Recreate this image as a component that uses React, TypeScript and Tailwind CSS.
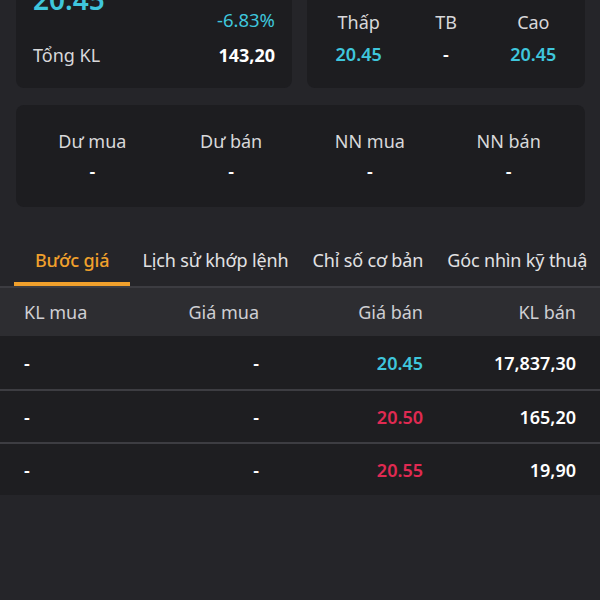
const CYAN = "text-[#3fc6dc]"
const RED = "text-[#e02a52]"

interface StatCol {
    label: string
    value: string
    tone?: "cyan" | "plain"
}

const rangeCols: StatCol[] = [
    { label: "Thấp", value: "20.45", tone: "cyan" },
    { label: "TB", value: "-" },
    { label: "Cao", value: "20.45", tone: "cyan" },
]

const flowCols: StatCol[] = [
    { label: "Dư mua", value: "-" },
    { label: "Dư bán", value: "-" },
    { label: "NN mua", value: "-" },
    { label: "NN bán", value: "-" },
]

const tabs = ["Bước giá", "Lịch sử khớp lệnh", "Chỉ số cơ bản", "Góc nhìn kỹ thuật"]

interface Step {
    buyVol: string
    buyPrice: string
    sellPrice: string
    sellVol: string
    sellTone: "cyan" | "red"
}

const steps: Step[] = [
    { buyVol: "-", buyPrice: "-", sellPrice: "20.45", sellVol: "17,837,30", sellTone: "cyan" },
    { buyVol: "-", buyPrice: "-", sellPrice: "20.50", sellVol: "165,20", sellTone: "red" },
    { buyVol: "-", buyPrice: "-", sellPrice: "20.55", sellVol: "19,90", sellTone: "red" },
]

const TABLE_COLS = "grid grid-cols-[96px_139px_164px_1fr] px-6"

export default function App() {
    return (
        <div
            className="min-h-[600px] w-[600px] overflow-hidden bg-[#252529] text-[18px] text-[#e6e6e8]"
            style={{ fontFamily: '"Noto Sans", "Open Sans", sans-serif' }}
        >
            {/* price + range cards, top is scrolled out of view */}
            <div className="-mt-[24px] flex gap-[15px] pl-4 pr-[15px]">
                <div className="flex w-[276px] flex-col rounded-lg bg-[#1d1d20] px-[17px] pt-[13px] pb-[21px]">
                    <div className={`h-[20px] text-[28px] leading-[20px] font-semibold ${CYAN}`}>20.45</div>
                    <div className={`h-[22px] text-right text-[18.5px] leading-[22px] ${CYAN}`}>-6.83%</div>
                    <div className="mt-[12px] flex h-[24px] justify-between leading-[24px]">
                        <span className="text-[#d8d8da]">Tổng KL</span>
                        <span className="font-bold text-white">143,20</span>
                    </div>
                </div>
                <div className="grid flex-1 grid-cols-3 rounded-lg bg-[#1d1d20] px-[8px] pt-[34px]">
                    {rangeCols.map(c => (
                        <div key={c.label} className="flex flex-col items-center">
                            <span className="h-[24px] leading-[24px] text-[#d8d8da]">{c.label}</span>
                            <span
                                className={`mt-[8px] h-[24px] leading-[24px] font-semibold ${c.tone === "cyan" ? CYAN : "text-white"}`}
                            >
                                {c.value}
                            </span>
                        </div>
                    ))}
                </div>
            </div>

            {/* foreign / remaining */}
            <div className="mt-[17px] ml-4 mr-[15px] grid grid-cols-4 rounded-lg bg-[#1d1d20] px-[7px] pt-[24px] pb-[24px]">
                {flowCols.map(c => (
                    <div key={c.label} className="flex flex-col items-center">
                        <span className="h-[24px] leading-[24px] text-[#d8d8da]">{c.label}</span>
                        <span className="mt-[6px] h-[24px] leading-[24px] font-semibold text-white">{c.value}</span>
                    </div>
                ))}
            </div>

            {/* tabs */}
            <div className="mt-[29px] border-b-2 border-[#3c3c41]">
                <div className="mr-[13px] flex overflow-hidden whitespace-nowrap pl-[14px] tracking-[-0.15px]">
                    {tabs.map((t, i) => (
                        <div
                            key={t}
                            className={
                                i === 0
                                    ? "shrink-0 border-b-4 border-[#f0a02c] px-[21px] pt-[12px] pb-[10px] leading-[24px] font-medium text-[#f0a02c]"
                                    : "shrink-0 border-b-4 border-transparent px-[12px] pt-[12px] pb-[10px] leading-[24px] text-[#e2e2e4]"
                            }
                        >
                            {t}
                        </div>
                    ))}
                </div>
            </div>

            {/* order book */}
            <div className={`${TABLE_COLS} h-[48px] items-center bg-[#2d2d31] leading-[24px] text-[#cfcfd3]`}>
                <span>KL mua</span>
                <span className="text-right">Giá mua</span>
                <span className="text-right">Giá bán</span>
                <span className="text-right">KL bán</span>
            </div>
            {steps.map((s, i) => (
                <div
                    key={s.sellPrice}
                    className={`${TABLE_COLS} h-[53px] items-center bg-[#1e1e21] leading-[24px] font-semibold ${i > 0 ? "border-t-2 border-[#3d3d42]" : "h-[51px]"}`}
                >
                    <span className="text-white">{s.buyVol}</span>
                    <span className="text-right text-white">{s.buyPrice}</span>
                    <span className={`text-right ${s.sellTone === "cyan" ? CYAN : RED}`}>{s.sellPrice}</span>
                    <span className="text-right text-white">{s.sellVol}</span>
                </div>
            ))}
        </div>
    )
}
